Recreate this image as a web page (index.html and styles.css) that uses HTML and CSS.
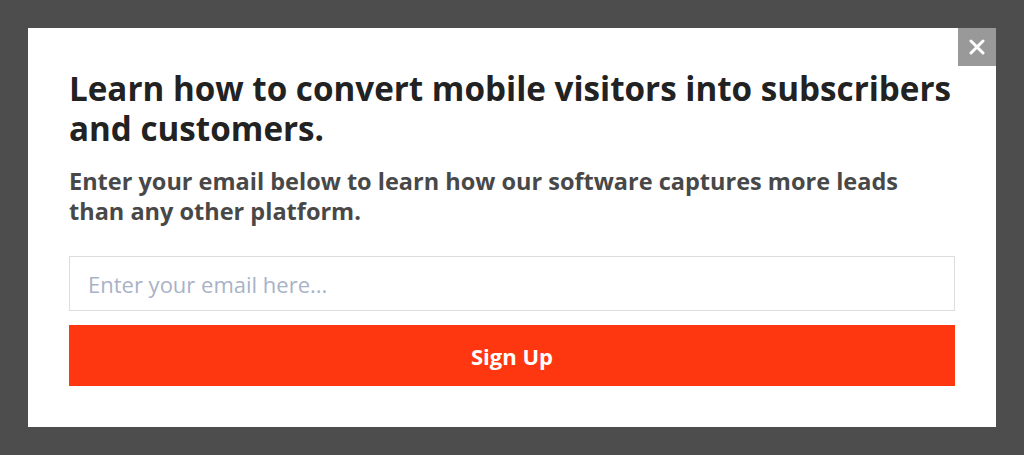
FILE: index.html
```html
<!DOCTYPE html>
<html>
  <head>
    <meta charset="UTF-8">
    <title>Mobile Optin</title>
    <link rel="stylesheet" href="styles.css">
  </head>
  <body>
    <div class="popup">
      <button class="close" aria-label="Close">
        <svg width="16" height="16" viewBox="0 0 16 16">
          <path d="M2 2 L14 14 M14 2 L2 14" stroke="#fff" stroke-width="3" stroke-linecap="round"/>
        </svg>
      </button>
      <h1 class="headline">Learn how to convert mobile visitors into subscribers and customers.</h1>
      <p class="tagline">Enter your email below to learn how our software captures more leads than any other platform.</p>
      <form class="optin" onsubmit="return false">
        <input type="email" class="email" placeholder="Enter your email here...">
        <button type="submit" class="signup">Sign Up</button>
      </form>
    </div>
  </body>
</html>
```

FILE: styles.css
```css
body {
  margin: 0;
  padding: 28px;
  background: #4d4d4d;
  font-family: "Open Sans", Arial, sans-serif;
}
.popup {
  position: relative;
  background: #fff;
  padding: 41px;
}
.close {
  position: absolute;
  top: 0;
  right: 0;
  width: 38px;
  height: 38px;
  border: 0;
  padding: 0;
  background: #999;
  display: flex;
  align-items: center;
  justify-content: center;
  cursor: pointer;
}
.headline {
  margin: 0;
  font-size: 33.2px;
  line-height: 40px;
  font-weight: 700;
  color: #222;
}
.tagline {
  max-width: 860px;
  margin: 17px 0 0;
  font-size: 23.5px;
  line-height: 30px;
  font-weight: 700;
  color: #484848;
}
.optin {
  margin-top: 30px;
  display: flex;
  flex-direction: column;
  gap: 14px;
}
.email {
  box-sizing: border-box;
  height: 55px;
  border: 1px solid #dcdcdc;
  padding: 0 18px;
  font-family: inherit;
  font-size: 22px;
  color: #333;
  outline: none;
}
.email::placeholder {
  color: #a9b2c7;
}
.signup {
  height: 61px;
  border: 0;
  background: #ff3710;
  color: #fff;
  font-family: inherit;
  font-size: 22px;
  font-weight: 700;
  cursor: pointer;
}
```
